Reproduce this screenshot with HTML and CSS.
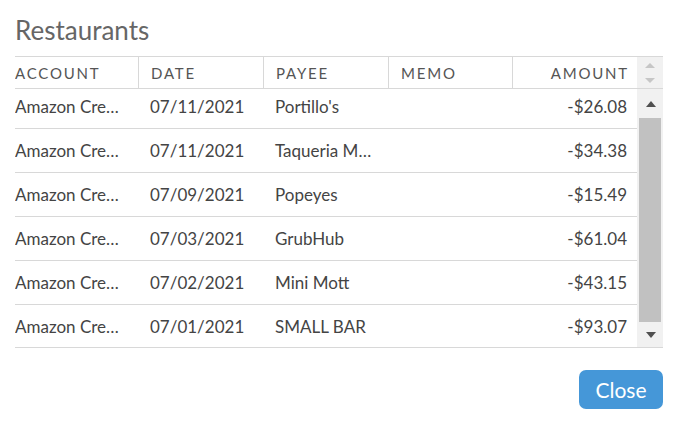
FILE: index.html
```html
<!DOCTYPE html>
<html>
<head>
<meta charset="utf-8">
<link rel="stylesheet" href="styles.css">
</head>
<body>
<div class="dialog">
  <h1 class="title">Restaurants</h1>
  <div class="table">
    <div class="head">
      <div class="hcells">
        <div class="hc c1">ACCOUNT</div>
        <div class="hc c2">DATE</div>
        <div class="hc c3">PAYEE</div>
        <div class="hc c4">MEMO</div>
        <div class="hc c5 right">AMOUNT</div>
      </div>
      <div class="hscroll">
        <svg width="12" height="22" viewBox="0 0 12 22"><path d="M1 6 L6 1 L11 6 Z" fill="#c6c6c6"/><path d="M1 16 L11 16 L6 21 Z" fill="#c6c6c6"/></svg>
      </div>
    </div>
    <div class="bodywrap">
      <div class="rows">
        <div class="row first"><div class="c c1">Amazon Cre…</div><div class="c c2">07/11/2021</div><div class="c c3">Portillo's</div><div class="c c4"></div><div class="c c5 right">-$26.08</div></div>
        <div class="row"><div class="c c1">Amazon Cre…</div><div class="c c2">07/11/2021</div><div class="c c3">Taqueria M…</div><div class="c c4"></div><div class="c c5 right">-$34.38</div></div>
        <div class="row"><div class="c c1">Amazon Cre…</div><div class="c c2">07/09/2021</div><div class="c c3">Popeyes</div><div class="c c4"></div><div class="c c5 right">-$15.49</div></div>
        <div class="row"><div class="c c1">Amazon Cre…</div><div class="c c2">07/03/2021</div><div class="c c3">GrubHub</div><div class="c c4"></div><div class="c c5 right">-$61.04</div></div>
        <div class="row"><div class="c c1">Amazon Cre…</div><div class="c c2">07/02/2021</div><div class="c c3">Mini Mott</div><div class="c c4"></div><div class="c c5 right">-$43.15</div></div>
        <div class="row"><div class="c c1">Amazon Cre…</div><div class="c c2">07/01/2021</div><div class="c c3">SMALL BAR</div><div class="c c4"></div><div class="c c5 right">-$93.07</div></div>
      </div>
      <div class="scrollbar">
        <div class="arrow">
          <svg width="10" height="6" viewBox="0 0 10 6"><path d="M0 6 L5 0 L10 6 Z" fill="#505050"/></svg>
        </div>
        <div class="thumb"></div>
        <div class="arrow down">
          <svg width="10" height="6" viewBox="0 0 10 6"><path d="M0 0 L10 0 L5 6 Z" fill="#505050"/></svg>
        </div>
      </div>
    </div>
  </div>
  <div class="footer">
    <button class="close">Close</button>
  </div>
</div>
</body>
</html>
```

FILE: styles.css
```css
html, body {
  margin: 0;
  padding: 0;
  background: #fff;
}
body {
  font-family: Lato, "Open Sans", sans-serif;
  color: #444;
}
.dialog {
  width: 648px;
  padding: 16px 17px 0 15px;
}
.title {
  margin: 0 0 11px 0;
  font-size: 26px;
  line-height: 29px;
  font-weight: 400;
  color: #666;
}
.table {
  border-top: 1px solid #d8d8d8;
  border-bottom: 1px solid #d8d8d8;
}
.head {
  display: flex;
  height: 31px;
  border-bottom: 1px solid #d8d8d8;
}
.hcells {
  display: grid;
  grid-template-columns: 123px 125px 125px 124px 125px;
  width: 622px;
}
.hc {
  font-size: 15px;
  letter-spacing: 1.8px;
  color: #555;
  line-height: 32px;
  padding: 0 12px;
  border-left: 1px solid #d8d8d8;
  white-space: nowrap;
  overflow: hidden;
}
.hc.c1 {
  border-left: none;
  padding-left: 0;
}
.right {
  text-align: right;
}
.hc.right {
  padding-right: 8px;
}
.c.right {
  padding-right: 10px;
}
.hscroll {
  width: 26px;
  background: #f1f1f1;
  display: flex;
  align-items: center;
  justify-content: center;
}
.hscroll svg {
  display: block;
}
.bodywrap {
  display: flex;
  height: 258px;
}
.rows {
  width: 622px;
  overflow: hidden;
}
.row {
  display: grid;
  grid-template-columns: 123px 125px 125px 124px 125px;
  height: 43px;
  border-bottom: 1px solid #d8d8d8;
  align-items: center;
}
.row.first {
  margin-top: -4px;
}
.c {
  font-size: 17px;
  padding: 0 12px;
  white-space: nowrap;
  overflow: hidden;
  text-overflow: ellipsis;
}
.c.c1 {
  padding-left: 0;
  padding-right: 4px;
}
.scrollbar {
  width: 26px;
  background: #f1f1f1;
  display: flex;
  flex-direction: column;
  align-items: center;
}
.arrow {
  height: 29px;
  display: flex;
  align-items: center;
  justify-content: center;
  padding-left: 1px;
}
.arrow svg {
  display: block;
}
.thumb {
  width: 22px;
  height: 204px;
  background: #c1c1c1;
}
.arrow.down {
  flex: 1;
}
.footer {
  display: flex;
  justify-content: flex-end;
  padding-top: 22px;
}
.close {
  width: 84px;
  height: 39px;
  border: none;
  border-radius: 7px;
  background: #4597d8;
  color: #fff;
  font-family: Lato, "Open Sans", sans-serif;
  font-size: 21px;
  padding: 0;
  cursor: pointer;
}
```
